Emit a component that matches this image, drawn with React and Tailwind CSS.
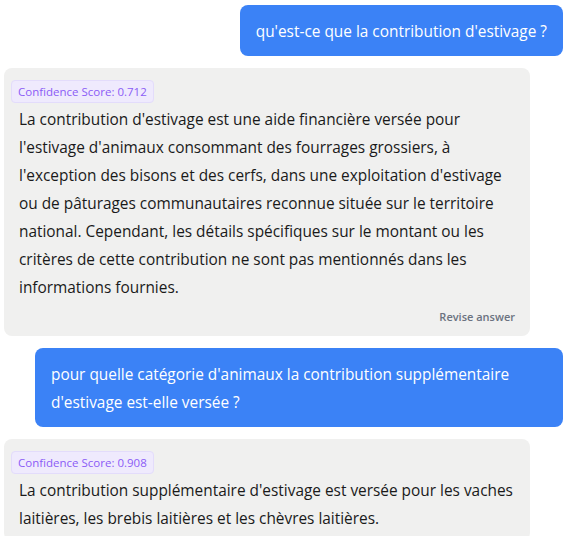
const messages = [
  { role: "user", text: "qu'est-ce que la contribution d'estivage ?" },
  {
    role: "assistant",
    score: "0.712",
    text: "La contribution d'estivage est une aide financière versée pour l'estivage d'animaux consommant des fourrages grossiers, à l'exception des bisons et des cerfs, dans une exploitation d'estivage ou de pâturages communautaires reconnue située sur le territoire national. Cependant, les détails spécifiques sur le montant ou les critères de cette contribution ne sont pas mentionnés dans les informations fournies.",
    revise: true,
  },
  {
    role: "user",
    text: "pour quelle catégorie d'animaux la contribution supplémentaire d'estivage est-elle versée ?",
  },
  {
    role: "assistant",
    score: "0.908",
    text: "La contribution supplémentaire d'estivage est versée pour les vaches laitières, les brebis laitières et les chèvres laitières.",
  },
];

function UserBubble({ text }) {
  return (
    <div className="flex justify-end">
      <div className="max-w-[528px] rounded-lg bg-[#3b82f6] px-4 pt-[13px] pb-[10px] text-[15.4px] leading-7 text-white">
        {text}
      </div>
    </div>
  );
}

function AssistantBubble({ score, text, revise }) {
  return (
    <div className="flex justify-start">
      <div className="w-[526px] rounded-lg bg-[#f0f0ef] px-[7px] pt-3 pb-2">
        <div className="flex">
          <span className="rounded border border-[#e3dcfb] bg-[#efeafd] px-[6px] py-[3px] text-[11.5px] font-medium leading-[15px] text-[#8b5cf6]">
            Confidence Score: {score}
          </span>
        </div>
        <p className="mt-[3px] px-2 text-[15.4px] leading-7 text-[#1a1a1a]">{text}</p>
        {revise && (
          <div className="mt-1 flex justify-end px-2">
            <button className="text-[11px] font-semibold leading-[22px] text-[#6b7280]">
              Revise answer
            </button>
          </div>
        )}
      </div>
    </div>
  );
}

export default function App() {
  return (
    <div className="flex min-h-screen flex-col gap-3 bg-white pt-[5px] pl-1 pr-2 font-['Open_Sans',sans-serif]">
      {messages.map((m, i) =>
        m.role === "user" ? (
          <UserBubble key={i} text={m.text} />
        ) : (
          <AssistantBubble key={i} {...m} />
        )
      )}
    </div>
  );
}
